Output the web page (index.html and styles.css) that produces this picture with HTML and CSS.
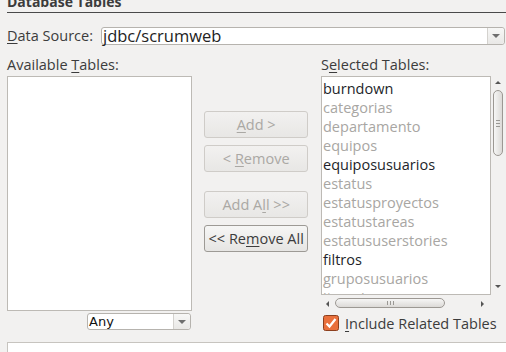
FILE: index.html
```html
<!DOCTYPE html>
<html lang="en">
<head>
  <meta charset="UTF-8" />
  <title>Database Tables</title>
  <link rel="stylesheet" href="styles.css">
</head>
<body>
  <div class="panel">
    <div class="title"><span>Database Tables</span></div>

    <div class="source-row">
      <label class="label"><u>D</u>ata Source:</label>
      <div class="combo wide">
        <span class="combo-text">jdbc/scrumweb</span>
        <span class="combo-btn"><span class="tri"></span></span>
      </div>
    </div>

    <div class="tables">
      <div class="col-left">
        <div class="label">Available <u>T</u>ables:</div>
        <div class="listbox left-list"></div>
        <div class="combo small">
          <span class="combo-text">Any</span>
          <span class="combo-btn"><span class="tri"></span></span>
        </div>
      </div>

      <div class="col-mid">
        <button class="btn" disabled><u>A</u>dd &gt;</button>
        <button class="btn" disabled>&lt; <u>R</u>emove</button>
        <button class="btn gap" disabled>Add A<u>l</u>l &gt;&gt;</button>
        <button class="btn active">&lt;&lt; Re<u>m</u>ove All</button>
      </div>

      <div class="col-right">
        <div class="label">S<u>e</u>lected Tables:</div>
        <div class="scroll-wrap">
          <div class="listbox right-list">
            <div class="item on">burndown</div>
            <div class="item">categorias</div>
            <div class="item">departamento</div>
            <div class="item">equipos</div>
            <div class="item on">equiposusuarios</div>
            <div class="item">estatus</div>
            <div class="item">estatusproyectos</div>
            <div class="item">estatustareas</div>
            <div class="item">estatususerstories</div>
            <div class="item on">filtros</div>
            <div class="item">gruposusuarios</div>
            <div class="item">iteraciones</div>
          </div>
          <div class="vscroll">
            <span class="arr up"></span>
            <span class="vthumb"><span class="vgrip"></span></span>
            <span class="arr down"></span>
          </div>
        </div>
        <div class="hscroll">
          <span class="arr left"></span>
          <span class="hthumb"><span class="hgrip"></span></span>
          <span class="arr right"></span>
        </div>
        <div class="check-row">
          <svg class="check" width="16" height="16" viewBox="0 0 16 16">
            <rect x="0.5" y="0.5" width="15" height="15" rx="2" fill="#e9703c" stroke="#8c3f1e"/>
            <path d="M3.5 8.5 L6.5 11.5 L12.5 4" fill="none" stroke="#ffffff" stroke-width="2.2"/>
          </svg>
          <span class="check-label"><u>I</u>nclude Related Tables</span>
        </div>
      </div>
    </div>

    <div class="bottom-box"></div>
  </div>
</body>
</html>
```

FILE: styles.css
```css
body {
  margin: 0;
  padding: 0;
  background-color: #f2f1f0;
  font-family: "Open Sans", sans-serif;
  font-size: 14.5px;
  color: #3c3c3c;
  width: 506px;
  height: 352px;
  overflow: hidden;
}

u {
  text-decoration: underline;
  text-underline-offset: 2px;
}

.panel {
  padding-left: 7px;
}

.title {
  height: 12px;
  border-bottom: 1px solid #4a4a4a;
  overflow: hidden;
}

.title span {
  display: block;
  font-weight: bold;
  font-size: 14px;
  line-height: 14px;
  margin-top: -5px;
  color: #3c3c3c;
}

.source-row {
  display: flex;
  align-items: center;
  margin-top: 14px;
  height: 18px;
}

.label {
  color: #3c3c3c;
  line-height: 18px;
  white-space: nowrap;
}

.source-row .label {
  width: 94px;
}

.combo {
  display: flex;
  height: 16px;
  border: 1px solid #b6b3ae;
  border-radius: 3px;
  background: #fff;
  box-sizing: content-box;
}

.combo.wide {
  flex: 1;
  margin-right: 1px;
}

.combo-text {
  flex: 1;
  padding-left: 1px;
  line-height: 16px;
  font-size: 16.5px;
  color: #222;
  white-space: nowrap;
}

.combo-btn {
  width: 16px;
  border-left: 1px solid #d4d2ce;
  background: linear-gradient(#f7f7f6, #e9e8e6);
  display: flex;
  align-items: center;
  justify-content: center;
  border-radius: 0 3px 3px 0;
}

.tri {
  width: 0;
  height: 0;
  border-left: 4px solid transparent;
  border-right: 4px solid transparent;
  border-top: 4px solid #6e6e6e;
}

.tables {
  display: flex;
  margin-top: 11px;
}

.col-left {
  width: 186px;
}

.listbox {
  background: #fff;
  border: 1px solid #bdbab5;
  box-sizing: border-box;
}

.left-list {
  margin-top: 2px;
  height: 235px;
}

.combo.small {
  width: 102px;
  height: 15px;
  margin: 2px 0 0 80px;
}

.combo.small .combo-text {
  font-family: "DejaVu Sans", sans-serif;
  font-size: 13px;
  line-height: 15px;
  color: #111;
}

.col-mid {
  width: 104px;
  margin-left: 12px;
  padding-top: 55px;
  display: flex;
  flex-direction: column;
}

.btn {
  height: 27px;
  margin-bottom: 7px;
  padding: 0;
  font-family: inherit;
  font-size: 14.5px;
  white-space: nowrap;
  border: 1px solid #cfccc8;
  border-radius: 3px;
  background: linear-gradient(#f2f1f0, #e8e7e5);
  color: #aaa8a4;
}

.btn.gap {
  margin-top: 12px;
}

.btn.active {
  border-color: #9d9a95;
  background: linear-gradient(#f6f6f5, #e6e5e3);
  color: #3c3c3c;
}

.col-right {
  margin-left: 13px;
  width: 185px;
}

.scroll-wrap {
  display: flex;
  margin-top: 2px;
  height: 219px;
}

.right-list {
  width: 170px;
  height: 219px;
  overflow: hidden;
  padding: 2px 0 0 1px;
}

.item {
  font-size: 14.5px;
  line-height: 19px;
  height: 19px;
  color: #a8a6a3;
  white-space: nowrap;
}

.item.on {
  color: #231f2a;
}

.vscroll {
  width: 15px;
  position: relative;
}

.arr {
  position: absolute;
  width: 0;
  height: 0;
}

.arr.up {
  left: 4px;
  top: 5px;
  border-left: 3px solid transparent;
  border-right: 3px solid transparent;
  border-bottom: 3px solid #555;
}

.arr.down {
  left: 4px;
  bottom: 7px;
  border-left: 3px solid transparent;
  border-right: 3px solid transparent;
  border-top: 3px solid #555;
}

.vthumb {
  position: absolute;
  left: 2px;
  top: 14px;
  width: 10px;
  height: 66px;
  border: 1px solid #9c9893;
  border-radius: 6px;
  background: linear-gradient(90deg, #f6f6f5, #dcdad7);
  box-sizing: border-box;
  display: flex;
  align-items: center;
  justify-content: center;
}

.vgrip {
  width: 4px;
  height: 5px;
  border-top: 1px solid #9a9894;
  border-bottom: 1px solid #9a9894;
  background: linear-gradient(transparent 2px, #9a9894 2px, #9a9894 3px, transparent 3px);
}

.hscroll {
  position: relative;
  height: 13px;
  margin-top: 2px;
  width: 170px;
}

.arr.left {
  left: 5px;
  top: 4px;
  border-top: 3px solid transparent;
  border-bottom: 3px solid transparent;
  border-right: 3px solid #555;
}

.arr.right {
  right: 7px;
  top: 4px;
  border-top: 3px solid transparent;
  border-bottom: 3px solid transparent;
  border-left: 3px solid #555;
}

.hthumb {
  position: absolute;
  left: 14px;
  top: 1px;
  width: 110px;
  height: 10px;
  border: 1px solid #9c9893;
  border-radius: 6px;
  background: linear-gradient(#f6f6f5, #dcdad7);
  box-sizing: border-box;
  display: flex;
  align-items: center;
  justify-content: center;
}

.hgrip {
  width: 5px;
  height: 4px;
  border-left: 1px solid #9a9894;
  border-right: 1px solid #9a9894;
  background: linear-gradient(90deg, transparent 2px, #9a9894 2px, #9a9894 3px, transparent 3px);
}

.check-row {
  display: flex;
  align-items: center;
  margin-top: 4px;
  margin-left: 2px;
  height: 18px;
}

.check {
  margin-right: 6px;
}

.check-label {
  font-size: 14.5px;
  color: #3c3c3c;
  white-space: nowrap;
}

.bottom-box {
  margin-top: 10px;
  height: 20px;
  background: #fff;
  border-top: 1px solid #c7c4bf;
  border-left: 1px solid #c7c4bf;
}
```
